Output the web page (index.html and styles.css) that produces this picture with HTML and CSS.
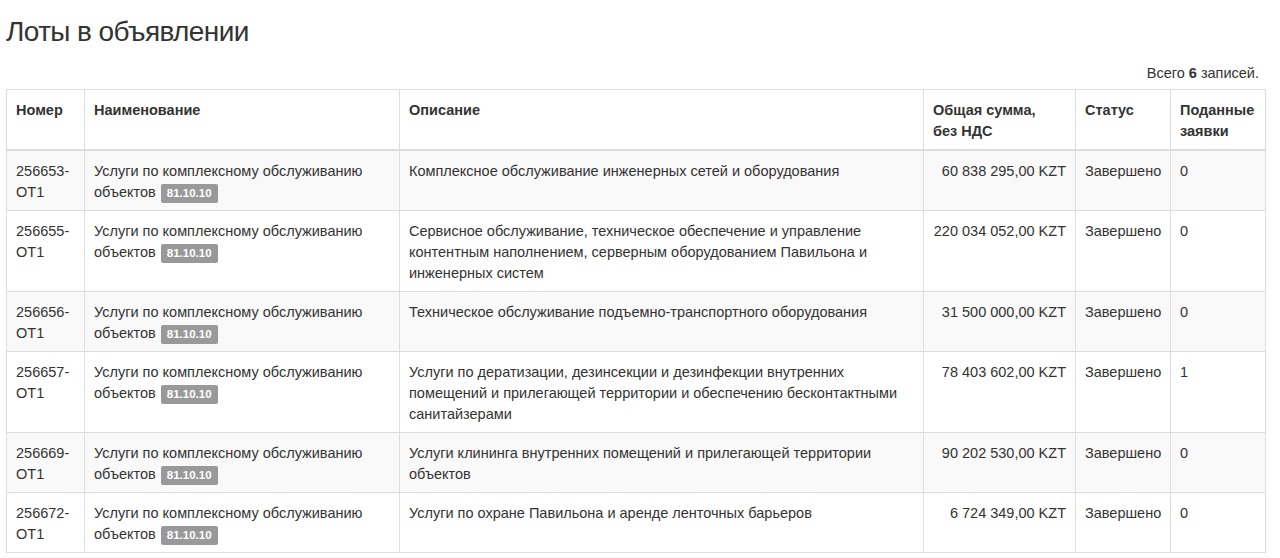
FILE: index.html
```html
<!DOCTYPE html>
<html lang="ru">
<head>
<meta charset="utf-8">
<link rel="stylesheet" href="styles.css">
</head>
<body>
<div class="page">
  <h1 class="title">Лоты в объявлении</h1>
  <div class="summary">Всего <b>6</b> записей.</div>
  <table class="lots">
    <colgroup>
      <col class="c-num"><col class="c-name"><col class="c-desc"><col class="c-sum"><col class="c-status"><col class="c-bids">
    </colgroup>
    <thead>
      <tr>
        <th>Номер</th>
        <th>Наименование</th>
        <th>Описание</th>
        <th>Общая сумма,<br>без НДС</th>
        <th>Статус</th>
        <th>Поданные заявки</th>
      </tr>
    </thead>
    <tbody>
      <tr>
        <td>256653-OT1</td>
        <td>Услуги по комплексному обслуживанию объектов <span class="badge">81.10.10</span></td>
        <td>Комплексное обслуживание инженерных сетей и оборудования</td>
        <td class="num">60 838 295,00 KZT</td>
        <td>Завершено</td>
        <td>0</td>
      </tr>
      <tr>
        <td>256655-OT1</td>
        <td>Услуги по комплексному обслуживанию объектов <span class="badge">81.10.10</span></td>
        <td>Сервисное обслуживание, техническое обеспечение и управление контентным наполнением, серверным оборудованием Павильона и инженерных систем</td>
        <td class="num">220 034 052,00 KZT</td>
        <td>Завершено</td>
        <td>0</td>
      </tr>
      <tr>
        <td>256656-OT1</td>
        <td>Услуги по комплексному обслуживанию объектов <span class="badge">81.10.10</span></td>
        <td>Техническое обслуживание подъемно-транспортного оборудования</td>
        <td class="num">31 500 000,00 KZT</td>
        <td>Завершено</td>
        <td>0</td>
      </tr>
      <tr>
        <td>256657-OT1</td>
        <td>Услуги по комплексному обслуживанию объектов <span class="badge">81.10.10</span></td>
        <td>Услуги по дератизации, дезинсекции и дезинфекции внутренних помещений и прилегающей территории и обеспечению бесконтактными санитайзерами</td>
        <td class="num">78 403 602,00 KZT</td>
        <td>Завершено</td>
        <td>1</td>
      </tr>
      <tr>
        <td>256669-OT1</td>
        <td>Услуги по комплексному обслуживанию объектов <span class="badge">81.10.10</span></td>
        <td>Услуги клининга внутренних помещений и прилегающей территории объектов</td>
        <td class="num">90 202 530,00 KZT</td>
        <td>Завершено</td>
        <td>0</td>
      </tr>
      <tr>
        <td>256672-OT1</td>
        <td>Услуги по комплексному обслуживанию объектов <span class="badge">81.10.10</span></td>
        <td>Услуги по охране Павильона и аренде ленточных барьеров</td>
        <td class="num">6 724 349,00 KZT</td>
        <td>Завершено</td>
        <td>0</td>
      </tr>
    </tbody>
  </table>
</div>
</body>
</html>
```

FILE: styles.css
```css
html, body {
  margin: 0;
  padding: 0;
  background: #fff;
}
body {
  font-family: "Liberation Sans", Arial, sans-serif;
  font-size: 14.5px;
  line-height: 21px;
  color: #333;
}
.page {
  padding: 16px 15px 0 6px;
}
.title {
  margin: 0;
  font-size: 28px;
  line-height: 32px;
  letter-spacing: -0.6px;
  font-weight: normal;
  color: #333;
}
.summary {
  margin-top: 15px;
  margin-bottom: 5px;
  text-align: right;
  padding-right: 6px;
}
.lots {
  width: 1259px;
  border-collapse: collapse;
  table-layout: fixed;
  border: 1px solid #ddd;
}
.c-num { width: 78px; }
.c-name { width: 315px; }
.c-desc { width: 524px; }
.c-sum { width: 152px; }
.c-status { width: 95px; }
.c-bids { width: 95px; }
.lots th, .lots td {
  border: 1px solid #ddd;
  padding: 10px 8px 7px 9px;
  text-align: left;
  vertical-align: top;
}
.lots th {
  font-weight: bold;
  border-bottom: 2px solid #ddd;
}
.lots tbody tr:nth-child(odd) {
  background: #f9f9f9;
}
.lots td.num {
  text-align: right;
  padding-right: 9px;
  padding-left: 4px;
}
.badge {
  display: inline-block;
  margin-left: 1px;
  background: #999;
  color: #fff;
  font-weight: bold;
  font-size: 11.5px;
  line-height: 13px;
  padding: 3px 6px 3px;
  border-radius: 2px;
  vertical-align: 0;
}
```
